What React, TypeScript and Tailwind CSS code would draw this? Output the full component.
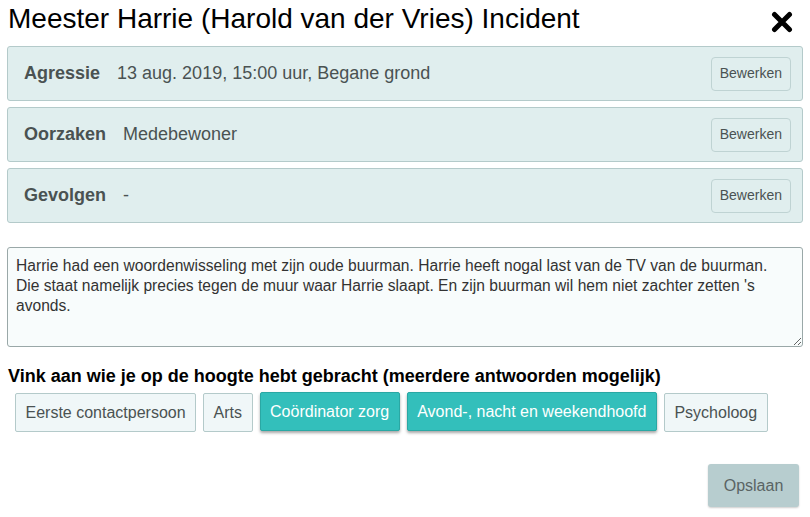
import { useState } from "react"

type Row = { label: string; value: string }

const rows: Row[] = [
  { label: "Agressie", value: "13 aug. 2019, 15:00 uur, Begane grond" },
  { label: "Oorzaken", value: "Medebewoner" },
  { label: "Gevolgen", value: "-" },
]

const people = [
  "Eerste contactpersoon",
  "Arts",
  "Coördinator zorg",
  "Avond-, nacht en weekendhoofd",
  "Psycholoog",
]

export default function App() {
  const [selected, setSelected] = useState<string[]>(["Coördinator zorg", "Avond-, nacht en weekendhoofd"])
  const [text, setText] = useState(
    "Harrie had een woordenwisseling met zijn oude buurman. Harrie heeft nogal last van de TV van de buurman. Die staat namelijk precies tegen de muur waar Harrie slaapt. En zijn buurman wil hem niet zachter zetten 's avonds."
  )

  function toggle(p: string) {
    setSelected((s) => (s.includes(p) ? s.filter((x) => x !== p) : [...s, p]))
  }

  return (
    <div className="w-[810px] h-[517px] bg-white font-['Liberation_Sans',Arial,sans-serif] px-[7px] overflow-hidden">
      {/* Header */}
      <div className="flex items-center justify-between h-[40px] pl-[1px] pr-[10px]">
        <h1 className="text-[28px] leading-none text-black -mt-[3px]">Meester Harrie (Harold van der Vries) Incident</h1>
        <button aria-label="Sluiten" className="text-black mt-[4px]">
          <svg width="22" height="22" viewBox="0 0 22 22">
            <path d="M3.5 3.5 L18.5 18.5 M18.5 3.5 L3.5 18.5" stroke="currentColor" strokeWidth="5" strokeLinecap="round" />
          </svg>
        </button>
      </div>

      {/* Summary rows */}
      <div className="flex flex-col gap-[6px] mt-[6px]">
        {rows.map((r) => (
          <div
            key={r.label}
            className="flex items-center justify-between h-[55px] bg-[#e0eeee] border border-[#b4caca] rounded-[3px] pl-[16px] pr-[11px]"
          >
            <div className="flex items-center gap-[17px] text-[18px] text-[#4a5252]">
              <span className="font-bold">{r.label}</span>
              <span>{r.value}</span>
            </div>
            <button className="h-[34px] px-[8px] text-[14px] text-[#4a5252] border border-[#bfd3d3] rounded-[4px] bg-[#e0eeee]">
              Bewerken
            </button>
          </div>
        ))}
      </div>

      {/* Description */}
      <textarea
        value={text}
        onChange={(e) => setText(e.target.value)}
        className="block w-full h-[100px] mt-[24px] bg-[#f8fcfc] border border-[#9aa8a8] rounded-[3px] px-[8px] py-[8px] text-[15.6px] leading-[20px] text-[#333] resize-y outline-none"
      />

      <h2 className="mt-[19px] pl-[1px] text-[18px] font-bold text-black leading-[20px]">
        Vink aan wie je op de hoogte hebt gebracht (meerdere antwoorden mogelijk)
      </h2>

      <div className="flex items-start gap-[7px] mt-[7px] pl-[8px]">
        {people.map((p) => {
          const on = selected.includes(p)
          return (
            <button
              key={p}
              onClick={() => toggle(p)}
              className={
                on
                  ? "h-[39px] px-[9.5px] text-[16px] rounded-[2px] bg-[#33bfbb] text-white border border-[#2aa8a4] shadow-[0_2px_3px_rgba(0,0,0,0.35)] -mt-[1px]"
                  : "h-[39px] px-[9.5px] text-[16px] rounded-[2px] bg-[#f0f7f8] text-[#4a5252] border border-[#b4caca]"
              }
            >
              {p}
            </button>
          )
        })}
      </div>

      <div className="flex justify-end mt-[32px] pr-[4px]">
        <button className="h-[43px] w-[91px] text-[16px] rounded-[3px] bg-[#b7cdcf] text-[#5a6464] shadow-[0_1px_2px_rgba(0,0,0,0.2)]">
          Opslaan
        </button>
      </div>
    </div>
  )
}
